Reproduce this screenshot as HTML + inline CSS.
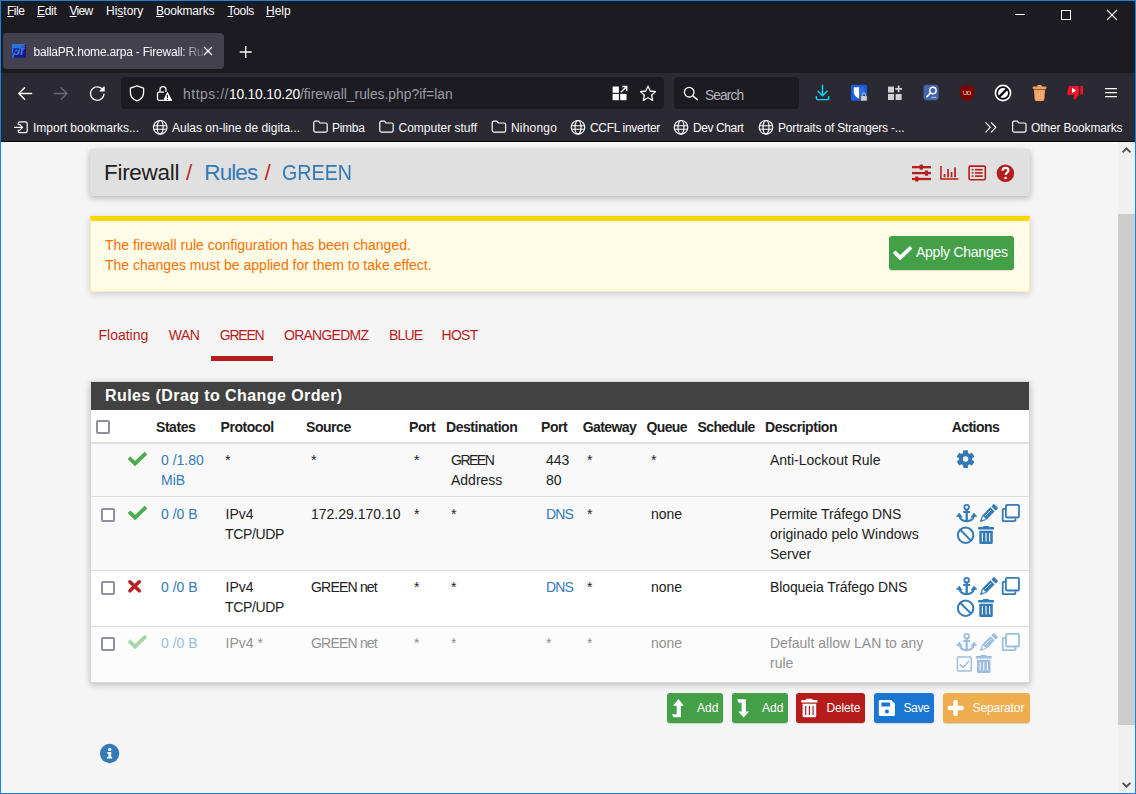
<!DOCTYPE html>
<html lang="en">
<head>
<meta charset="utf-8">
<title>ballaPR.home.arpa - Firewall: Rules: GREEN</title>
<style>
*{box-sizing:border-box;margin:0;padding:0}
html,body{width:1136px;height:794px;overflow:hidden;background:#1c1b22}
body{font-family:"Liberation Sans",sans-serif;position:relative;color:#fbfbfe}
.abs{position:absolute}
#win{position:absolute;left:0;top:0;width:1136px;height:794px;background:#1c1b22;overflow:hidden}
.wb{position:absolute;background:#1883d7;z-index:50}
/* ---------- browser chrome ---------- */
#menubar{position:absolute;left:0;top:0;width:1136px;height:30px;font-size:12px;line-height:16px;color:#fbfbfe}
#menubar span{position:absolute;top:3px;white-space:nowrap}
#menubar u{text-decoration:underline;text-underline-offset:1px}
#tab{position:absolute;left:3px;top:33px;width:221px;height:36px;background:#42414d;border-radius:4px}
#tabtitle{position:absolute;left:30.5px;top:11px;width:169px;height:18px;-webkit-mask-image:linear-gradient(to right,#000 0,#000 143px,transparent 175px);mask-image:linear-gradient(to right,#000 0,#000 143px,transparent 175px);font-size:12px;letter-spacing:-.21px;line-height:16px;white-space:nowrap;overflow:hidden;color:#fbfbfe}
#navbar{position:absolute;left:1px;top:73px;width:1134px;height:69px;background:#2b2a33;border-bottom:1px solid #020203}
#urlbar{position:absolute;left:121px;top:77px;width:543px;height:32px;background:#1c1b22;border-radius:4px}
#urltext{position:absolute;left:183px;top:85px;font-size:13.85px;line-height:18px;color:#9b9ba3;white-space:nowrap}
#urltext b{font-weight:normal;color:#fbfbfe;letter-spacing:-.2px}
#searchbar{position:absolute;left:674px;top:77px;width:125px;height:32px;background:#1c1b22;border-radius:4px}
#searchtext{position:absolute;left:705px;top:86px;letter-spacing:-.95px;font-size:13.85px;line-height:18px;color:#b4b4bb}
.bm{position:absolute;top:120px;font-size:12px;line-height:16px;white-space:nowrap;color:#fbfbfe}
/* ---------- page ---------- */
#page{position:absolute;left:1px;top:142px;width:1117px;height:651px;border-top:1px solid #fff;background:#f5f5f5;overflow:hidden;color:#212121;font-size:14px}
#scroll{position:absolute;left:1118px;top:142px;width:17px;height:651px;background:#f0f0f0}
#thumb{position:absolute;left:0;top:72px;width:17px;height:511px;background:#cdcdcd}

/* ---------- pfSense page ---------- */
.pg{position:absolute;white-space:nowrap;font-size:14px;line-height:20px;color:#212121}
#crumb{position:absolute;left:90px;top:149px;width:940px;height:47px;background:#e0e0e0;border-radius:2px;box-shadow:0 2px 5px rgba(0,0,0,.16),0 2px 10px rgba(0,0,0,.12)}
.h1{position:absolute;top:158px;font-size:22.5px;line-height:30px;white-space:nowrap;color:#212121;transform-origin:0 50%}
#alert{position:absolute;left:90px;top:216px;width:940px;height:76px;background:#fffde7;border:1px solid #ffe9b0;border-top:5px solid #ffd600;box-shadow:0 2px 5px rgba(0,0,0,.10),0 2px 10px rgba(0,0,0,.08)}
.al{color:#f96f00}
#apply{position:absolute;left:889px;top:236px;width:125px;height:34px;background:#43a047;border-radius:3px;box-shadow:0 1px 1px rgba(0,0,0,.15)}
.tab{color:#b71c1c}
#tabline{position:absolute;left:211px;top:356px;width:62px;height:5px;background:#b71c1c}
#panel{position:absolute;left:90px;top:381px;width:940px;height:302px;background:#fafafa;border:1px solid #d8d8d8;box-shadow:0 2px 5px rgba(0,0,0,.14),0 2px 10px rgba(0,0,0,.10)}
#phead{position:absolute;left:91px;top:382px;width:938px;height:28px;background:#424242}
#ptitle{position:absolute;left:105px;top:385px;font-size:16px;line-height:22px;font-weight:bold;color:#fff;letter-spacing:.42px;white-space:nowrap}
#thead{position:absolute;left:91px;top:410px;width:938px;height:32px;background:#fff;border-bottom:0}
.rowbg{position:absolute;left:91px;width:938px}
.hl{position:absolute;left:91px;width:938px;background:#ddd}
.th{font-weight:bold;letter-spacing:-.45px}
.lnk{color:#337ab7}
.dis{color:#919191}
.dis.lnk{color:#9bbcdb}
.cb{position:absolute;width:14px;height:14px;border:2px solid #8f8f9d;border-radius:2px;background:#fff}
.btn{position:absolute;top:693px;height:30px;border-radius:3px;box-shadow:0 1px 1px rgba(0,0,0,.15)}
.bt{position:absolute;top:698px;font-size:12px;line-height:20px;color:#fff;white-space:nowrap}
</style>
</head>
<body>
<div id="win">
  <div id="menubar">
    <span style="left:7px;letter-spacing:-.5px"><u>F</u>ile</span>
    <span style="left:37px;letter-spacing:-.3px"><u>E</u>dit</span>
    <span style="left:69.5px;letter-spacing:-.7px"><u>V</u>iew</span>
    <span style="left:106px">Hi<u>s</u>tory</span>
    <span style="left:156px;letter-spacing:-.2px"><u>B</u>ookmarks</span>
    <span style="left:227.5px;letter-spacing:-.3px"><u>T</u>ools</span>
    <span style="left:266px"><u>H</u>elp</span>
  </div>
  <div id="tab"><div id="tabtitle">ballaPR.home.arpa - Firewall: Ru</div></div>
  <div id="navbar"></div>
  <div id="urlbar"></div>
  <div id="urltext"><span style="letter-spacing:.55px">https://</span><b>10.10.10.20</b>/firewall_rules.php?if=lan</div>
  <div id="searchbar"></div>
  <div id="searchtext">Search</div>

  <svg id="chrome" class="abs" style="left:0;top:0" width="1136" height="141" viewBox="0 0 1136 141">
    <!-- window controls -->
    <path d="M1015 14.5H1025" stroke="#fbfbfe" stroke-width="1"/>
    <rect x="1061.5" y="10.5" width="9" height="9" fill="none" stroke="#fbfbfe" stroke-width="1"/>
    <path d="M1107 10L1117 20M1117 10L1107 20" stroke="#fbfbfe" stroke-width="1.1"/>
    <!-- tab favicon -->
    <defs><clipPath id="fvA"><path d="M11.800 44H25.900L19.500 49.500L11.800 54Z"/></clipPath><clipPath id="fvB"><path clip-rule="evenodd" d="M11.800 44H25.900V57.700H11.800Z M11.800 44H25.900L19.500 49.500L11.800 54Z"/></clipPath></defs>
    <rect x="11.800" y="44" width="14.100" height="13.700" fill="#17178c"/>
    <path d="M11.800 44H25.900L19.500 49.500L11.800 54Z" fill="#2a76d6"/>
    <text x="12.300" y="55" font-family="Liberation Sans,sans-serif" font-style="italic" font-weight="bold" font-size="13" letter-spacing="-.5" fill="#3a7ce2" clip-path="url(#fvB)">pf</text>
    <text x="12.300" y="55" font-family="Liberation Sans,sans-serif" font-style="italic" font-weight="bold" font-size="13" letter-spacing="-.5" fill="#1c2496" clip-path="url(#fvA)">pf</text>
    <!-- tab close -->
    <path d="M204 47L212 55M212 47L204 55" stroke="#fbfbfe" stroke-width="1.2"/>
    <!-- new tab + -->
    <path d="M239.7 52H251.7M245.7 46V58" stroke="#fbfbfe" stroke-width="1.3"/>
    <!-- back -->
    <path d="M31.6 93.5H19M24.6 87.7L18.8 93.5L24.6 99.3" fill="none" stroke="#fbfbfe" stroke-width="1.4" stroke-linecap="round" stroke-linejoin="round"/>
    <!-- forward -->
    <path d="M54.2 93.5H67M61.2 87.7L67 93.5L61.2 99.3" fill="none" stroke="#6b6a74" stroke-width="1.4" stroke-linecap="round" stroke-linejoin="round"/>
    <!-- reload -->
    <path transform="translate(88.8,85.1) scale(1.06)" fill="#fbfbfe" d="M10.707 6h3.793a.5.5 0 0 0 .5-.5V1.707a.5.5 0 0 0-.854-.353l-1.459 1.459A6.95 6.95 0 0 0 8 1C4.141 1 1 4.141 1 8s3.141 7 7 7a6.97 6.97 0 0 0 6.968-6.322.626.626 0 0 0-.562-.682.635.635 0 0 0-.682.562A5.726 5.726 0 0 1 8 13.75c-3.171 0-5.750-2.579-5.750-5.750S4.829 2.250 8 2.250a5.710 5.710 0 0 1 3.805 1.445l-1.451 1.451a.5.5 0 0 0 .353.854z"/>
    <!-- shield -->
    <path d="M137 85.9L143.6 88.2V92.6C143.6 96.9 140.6 99.7 137 100.8C133.4 99.700 130.400 96.900 130.400 92.600V88.200Z" fill="none" stroke="#fbfbfe" stroke-width="1.3" stroke-linejoin="round"/>
    <!-- lock + warning -->
    <path d="M160 92V89.600a3 3 0 0 1 6 0V92" fill="none" stroke="#fbfbfe" stroke-width="1.3"/>
    <path d="M164 92.100H159a1.500 1.500 0 0 0-1.500 1.500V98.800a1.500 1.500 0 0 0 1.500 1.500H163" fill="none" stroke="#fbfbfe" stroke-width="1.3"/>
    <path d="M167.800 92.300L172.200 100.300a.5.5 0 0 1-.45.750H163.700a.5.5 0 0 1-.45-.750L167 92.300a.46.46 0 0 1 .8 0z" fill="#fbfbfe"/>
    <path d="M167.400 94.700V98M167.400 99.100V100" stroke="#1c1b22" stroke-width="1.1"/>
    <!-- url grid icon -->
    <g fill="#fbfbfe"><rect x="612.600" y="86.500" width="6.300" height="6.300"/><rect x="612.600" y="93.900" width="6.300" height="6.300"/><rect x="620.200" y="93.900" width="6.300" height="6.300"/></g>
    <path d="M620.800 92.300L626.400 86.700M622.200 86.400H626.700V90.900" fill="none" stroke="#fbfbfe" stroke-width="1.500"/>
    <!-- star -->
    <path d="M648 86.200L650.250 91L655.500 91.600L651.600 95.200L652.650 100.350L648 97.800L643.350 100.350L644.400 95.200L640.500 91.600L645.750 91Z" fill="none" stroke="#fbfbfe" stroke-width="1.3" stroke-linejoin="round"/>
    <!-- search magnifier -->
    <circle cx="689.200" cy="92.200" r="4.800" fill="none" stroke="#fbfbfe" stroke-width="1.3"/>
    <path d="M692.700 95.700L697.400 99.600" stroke="#fbfbfe" stroke-width="1.4" stroke-linecap="round"/>
    <!-- download -->
    <path d="M822.500 85.200V95.600M818 91.300L822.500 95.800L827 91.300M816.300 96.600V98a1.600 1.600 0 0 0 1.600 1.600h9.200a1.600 1.600 0 0 0 1.600-1.600V96.600" fill="none" stroke="#00ddff" stroke-width="1.4" stroke-linecap="round" stroke-linejoin="round"/>
    <!-- bitwarden -->
    <rect x="851" y="84.800" width="16" height="16" rx="1.500" fill="#175ddc"/>
    <path d="M853.800 87.200H859.200V98.700C856 97.300 853.800 95.100 853.800 92.500Z" fill="#fff"/>
    <path d="M859.200 87.200H864.200V92.500C864.200 95.100 862.200 97.300 859.200 98.700Z" fill="#2f6be0"/>
    <rect x="860.600" y="95.600" width="6.600" height="5.400" rx=".7" fill="#cfcfd4" stroke="#2b2a33" stroke-width=".6"/>
    <path d="M862.300 95.600V94.600a1.600 1.600 0 0 1 3.200 0V95.600" fill="none" stroke="#cfcfd4" stroke-width="1"/>
    <!-- extensions -->
    <g fill="#cfcfd4"><rect x="888" y="86.600" width="6" height="6"/><rect x="888" y="94" width="6" height="6"/><rect x="895.600" y="94" width="6" height="6"/><path d="M897.800 85.600h1.700v2.500h2.500v1.700h-2.500v2.500h-1.700v-2.500h-2.500v-1.700h2.500z"/></g>
    <!-- search ext -->
    <rect x="923.500" y="84.800" width="15" height="15.500" rx="3" fill="#4363ab"/>
    <circle cx="932.900" cy="90.500" r="3.200" fill="none" stroke="#fff" stroke-width="1.400"/>
    <path d="M930.500 93L926.900 96.700" stroke="#fff" stroke-width="1.700" stroke-linecap="round"/>
    <path d="M931.500 97.300H936.200" stroke="#b9c6e6" stroke-width="1"/>
    <!-- ublock -->
    <path d="M967 85L974.200 87.300V92.800C974.200 96.800 971.200 99.600 967 101C962.800 99.600 959.800 96.800 959.800 92.800V87.300Z" fill="#800000"/>
    <text x="963.100" y="95.200" font-family="Liberation Sans,sans-serif" font-size="6" fill="#fff" letter-spacing="-.5" opacity=".92">UD</text>
    <!-- slash circle -->
    <circle cx="1003" cy="93" r="8.400" fill="#fbfbfe"/>
    <circle cx="1003" cy="93" r="5.900" fill="none" stroke="#111" stroke-width="1.700"/>
    <path d="M998.900 97.100L1007.100 88.900" stroke="#111" stroke-width="2.300"/>
    <!-- trash orange -->
    <g fill="#f0a15f"><rect x="1037.200" y="85" width="4.600" height="2.200" rx=".8"/><rect x="1032.600" y="86.600" width="13.800" height="2.300" rx="1"/><path d="M1033.800 89.600H1045.200L1044.300 99.600a1.500 1.500 0 0 1-1.500 1.400H1036.200a1.500 1.500 0 0 1-1.500-1.400Z"/></g>
    <path d="M1037 91.500V99M1039.500 91.500V99M1042 91.500V99" stroke="#f7c08f" stroke-width=".8"/>
    <!-- red thumbs down -->
    <path d="M1069.500 86H1079V94.500L1075 99.800C1073.800 99.800 1073.200 98.800 1073.500 97.600L1074.200 95H1069C1067.600 95 1066.800 93.800 1067.200 92.600L1068.600 87C1068.800 86.400 1069.100 86 1069.500 86Z" fill="#f0142a"/>
    <rect x="1080.300" y="86" width="2.700" height="8.400" fill="#f0142a"/>
    <path d="M1072 87.800L1076.300 90.400L1072 93Z" fill="#fff"/>
    <!-- hamburger -->
    <g fill="#fbfbfe"><rect x="1105" y="88" width="12" height="1.250" rx=".5"/><rect x="1105" y="92" width="12" height="1.250" rx=".5"/><rect x="1105" y="96" width="12" height="1.250" rx=".5"/></g>
    <!-- bookmarks toolbar icons -->
    <path d="M14.500 127.300H22.300M19.600 124.300L22.600 127.300L19.600 130.300" fill="none" stroke="#fbfbfe" stroke-width="1.200" stroke-linecap="round" stroke-linejoin="round"/>
    <path d="M18.200 124.600V123.600a1.700 1.700 0 0 1 1.700-1.700H25.500a1.700 1.700 0 0 1 1.700 1.700V131a1.700 1.700 0 0 1-1.700 1.700H19.900a1.700 1.700 0 0 1-1.700-1.700V130" fill="none" stroke="#fbfbfe" stroke-width="1.200" stroke-linecap="round"/>
    <g transform="translate(160.2,127.3)" fill="none" stroke="#fbfbfe" stroke-width="1.2"><circle r="6.8"/><ellipse rx="3" ry="6.8"/><path d="M-6.6 -1.6H6.6M-6.6 1.9H6.6" stroke-width="1.1"/></g><g transform="translate(578,127.3)" fill="none" stroke="#fbfbfe" stroke-width="1.2"><circle r="6.8"/><ellipse rx="3" ry="6.8"/><path d="M-6.6 -1.6H6.6M-6.6 1.9H6.6" stroke-width="1.1"/></g><g transform="translate(681,127.3)" fill="none" stroke="#fbfbfe" stroke-width="1.2"><circle r="6.8"/><ellipse rx="3" ry="6.8"/><path d="M-6.6 -1.6H6.6M-6.6 1.9H6.6" stroke-width="1.1"/></g><g transform="translate(766,127.3)" fill="none" stroke="#fbfbfe" stroke-width="1.2"><circle r="6.8"/><ellipse rx="3" ry="6.8"/><path d="M-6.6 -1.6H6.6M-6.6 1.9H6.6" stroke-width="1.1"/></g>
    <path transform="translate(313.2,120.6)" d="M0.6 2.1a1.5 1.5 0 0 1 1.5-1.5h3.1l1.7 1.8h5.6a1.5 1.5 0 0 1 1.5 1.5v6.1a1.5 1.5 0 0 1-1.5 1.5H2.1a1.5 1.5 0 0 1-1.5-1.5z" fill="none" stroke="#fbfbfe" stroke-width="1.2" stroke-linejoin="round"/><path transform="translate(379.2,120.6)" d="M0.6 2.1a1.5 1.5 0 0 1 1.5-1.5h3.1l1.7 1.8h5.6a1.5 1.5 0 0 1 1.5 1.5v6.1a1.5 1.5 0 0 1-1.5 1.5H2.1a1.5 1.5 0 0 1-1.5-1.5z" fill="none" stroke="#fbfbfe" stroke-width="1.2" stroke-linejoin="round"/><path transform="translate(491.6,120.6)" d="M0.6 2.1a1.5 1.5 0 0 1 1.5-1.5h3.1l1.7 1.8h5.6a1.5 1.5 0 0 1 1.5 1.5v6.1a1.5 1.5 0 0 1-1.5 1.5H2.1a1.5 1.5 0 0 1-1.5-1.5z" fill="none" stroke="#fbfbfe" stroke-width="1.2" stroke-linejoin="round"/><path transform="translate(1012,120.6)" d="M0.6 2.1a1.5 1.5 0 0 1 1.5-1.5h3.1l1.7 1.8h5.6a1.5 1.5 0 0 1 1.5 1.5v6.1a1.5 1.5 0 0 1-1.5 1.5H2.1a1.5 1.5 0 0 1-1.5-1.5z" fill="none" stroke="#fbfbfe" stroke-width="1.2" stroke-linejoin="round"/>
    <path d="M985.500 122.300L990.300 127.300L985.500 132.300M991 122.300L995.800 127.300L991 132.300" fill="none" stroke="#fbfbfe" stroke-width="1.200"/>
  </svg>

  <div class="bm" style="left:33px">Import bookmarks...</div>
  <div class="bm" style="left:172px">Aulas on-line de digita...</div>
  <div class="bm" style="left:332px;letter-spacing:-.3px">Pimba</div>
  <div class="bm" style="left:398.5px">Computer stuff</div>
  <div class="bm" style="left:511px;letter-spacing:.2px">Nihongo</div>
  <div class="bm" style="left:590px;letter-spacing:-.33px">CCFL inverter</div>
  <div class="bm" style="left:693px;letter-spacing:-.4px">Dev Chart</div>
  <div class="bm" style="left:778px;letter-spacing:-.16px">Portraits of Strangers -...</div>
  <div class="bm" style="left:1031px;letter-spacing:-.13px">Other Bookmarks</div>
  <div id="page"></div>
  <div id="crumb"></div>
  <div class="h1" style="left:104px;letter-spacing:-.3px">Firewall</div>
  <div class="h1" style="left:186px;color:#c62828">/</div>
  <div class="h1" style="left:204.3px;color:#337ab7;letter-spacing:-.9px">Rules</div>
  <div class="h1" style="left:264.5px;color:#c62828">/</div>
  <div class="h1" style="left:282.3px;color:#337ab7;transform:scaleX(.875)">GREEN</div>
  <div id="alert"></div>
  <div class="pg al" style="left:105px;top:234.5px;">The firewall rule configuration has been changed.</div>
  <div class="pg al" style="left:105px;top:254.5px;">The changes must be applied for them to take effect.</div>
  <div id="apply"></div>
  <div class="pg " style="left:916px;top:242px;color:#fff;letter-spacing:-.25px">Apply Changes</div>
  <div class="pg tab" style="left:98.5px;top:324.5px;letter-spacing:0px">Floating</div>
  <div class="pg tab" style="left:168.7px;top:324.5px;letter-spacing:-0.5px">WAN</div>
  <div class="pg tab" style="left:219.7px;top:324.5px;letter-spacing:-1.2px">GREEN</div>
  <div class="pg tab" style="left:284px;top:324.5px;letter-spacing:-0.75px">ORANGEDMZ</div>
  <div class="pg tab" style="left:389px;top:324.5px;letter-spacing:-0.8px">BLUE</div>
  <div class="pg tab" style="left:441.5px;top:324.5px;letter-spacing:-0.7px">HOST</div>
  <div id="tabline"></div>
  <div id="panel"></div><div id="phead"></div><div id="ptitle">Rules (Drag to Change Order)</div><div id="thead"></div>
  <div class="rowbg" style="top:444px;height:52px;background:#f9f9f9"></div><div class="rowbg" style="top:497px;height:73px;background:#f9f9f9"></div><div class="rowbg" style="top:571px;height:55px;background:#fff"></div><div class="rowbg" style="top:627px;height:55px;background:#fcfcfc"></div>
  <div class="hl" style="top:442px;height:2px"></div>
  <div class="hl" style="top:496px;height:1px"></div>
  <div class="hl" style="top:570px;height:1px"></div>
  <div class="hl" style="top:626px;height:1px"></div>
  <div class="pg th" style="left:156px;top:417px;">States</div>
  <div class="pg th" style="left:220.5px;top:417px;">Protocol</div>
  <div class="pg th" style="left:306px;top:417px;">Source</div>
  <div class="pg th" style="left:409px;top:417px;">Port</div>
  <div class="pg th" style="left:446px;top:417px;">Destination</div>
  <div class="pg th" style="left:541px;top:417px;">Port</div>
  <div class="pg th" style="left:582.7px;top:417px;letter-spacing:-.6px;">Gateway</div>
  <div class="pg th" style="left:646.5px;top:417px;letter-spacing:-.65px;">Queue</div>
  <div class="pg th" style="left:697.5px;top:417px;letter-spacing:-.62px;">Schedule</div>
  <div class="pg th" style="left:765px;top:417px;">Description</div>
  <div class="pg th" style="left:951.7px;top:417px;letter-spacing:-.55px;">Actions</div>
  <div class="cb" style="left:96px;top:420px"></div>
  <div class="pg lnk" style="left:161px;top:450px;">0 /1.80</div>
  <div class="pg lnk" style="left:161px;top:470px;">MiB</div>
  <div class="pg " style="left:225px;top:450px;">*</div>
  <div class="pg " style="left:311px;top:450px;">*</div>
  <div class="pg " style="left:414px;top:450px;">*</div>
  <div class="pg " style="left:451px;top:450px;letter-spacing:-1.5px">GREEN</div>
  <div class="pg " style="left:451px;top:470px;">Address</div>
  <div class="pg " style="left:546px;top:450px;">443</div>
  <div class="pg " style="left:546px;top:470px;">80</div>
  <div class="pg " style="left:587px;top:450px;">*</div>
  <div class="pg " style="left:651px;top:450px;">*</div>
  <div class="pg " style="left:770px;top:450px;">Anti-Lockout Rule</div>
  <div class="pg lnk" style="left:161px;top:504px;">0 /0 B</div>
  <div class="pg " style="left:225.5px;top:504px;">IPv4</div>
  <div class="pg " style="left:225px;top:524px;letter-spacing:-.35px">TCP/UDP</div>
  <div class="pg " style="left:311px;top:504px;">172.29.170.10</div>
  <div class="pg " style="left:414px;top:504px;">*</div>
  <div class="pg " style="left:451px;top:504px;">*</div>
  <div class="pg lnk" style="left:546px;top:504px;letter-spacing:-.85px">DNS</div>
  <div class="pg " style="left:587px;top:504px;">*</div>
  <div class="pg " style="left:651px;top:504px;">none</div>
  <div class="pg " style="left:770px;top:504px;letter-spacing:-.1px">Permite Tráfego DNS</div>
  <div class="pg " style="left:770px;top:524px;">originado pelo Windows</div>
  <div class="pg " style="left:770px;top:544px;">Server</div>
  <div class="pg lnk" style="left:161px;top:577px;">0 /0 B</div>
  <div class="pg " style="left:225.5px;top:577px;">IPv4</div>
  <div class="pg " style="left:225px;top:597px;letter-spacing:-.35px">TCP/UDP</div>
  <div class="pg " style="left:311px;top:577px;letter-spacing:-.8px">GREEN net</div>
  <div class="pg " style="left:414px;top:577px;">*</div>
  <div class="pg " style="left:451px;top:577px;">*</div>
  <div class="pg lnk" style="left:546px;top:577px;letter-spacing:-.85px">DNS</div>
  <div class="pg " style="left:587px;top:577px;">*</div>
  <div class="pg " style="left:651px;top:577px;">none</div>
  <div class="pg " style="left:770px;top:577px;letter-spacing:-.1px">Bloqueia Tráfego DNS</div>
  <div class="pg lnk dis" style="left:161px;top:633px;">0 /0 B</div>
  <div class="pg dis" style="left:225.5px;top:633px;">IPv4 *</div>
  <div class="pg dis" style="left:311px;top:633px;letter-spacing:-.8px">GREEN net</div>
  <div class="pg dis" style="left:414px;top:633px;">*</div>
  <div class="pg dis" style="left:451px;top:633px;">*</div>
  <div class="pg dis" style="left:546px;top:633px;">*</div>
  <div class="pg dis" style="left:587px;top:633px;">*</div>
  <div class="pg dis" style="left:651px;top:633px;">none</div>
  <div class="pg dis" style="left:770px;top:633px;">Default allow LAN to any</div>
  <div class="pg dis" style="left:770px;top:653px;">rule</div>
  <div class="cb" style="left:101px;top:508px"></div>
  <div class="cb" style="left:101px;top:581px"></div>
  <div class="cb" style="left:101px;top:637px"></div>
  <div class="btn" style="left:667px;width:56px;background:#43a047"></div>
  <div class="btn" style="left:732px;width:56px;background:#43a047"></div>
  <div class="btn" style="left:796px;width:69px;background:#b71c1c"></div>
  <div class="btn" style="left:874px;width:60px;background:#1976d2"></div>
  <div class="btn" style="left:943px;width:87px;background:#f0ad4e"></div>
  <div class="bt" style="left:697px">Add</div>
  <div class="bt" style="left:762px">Add</div>
  <div class="bt" style="left:826.5px;letter-spacing:-.15px">Delete</div>
  <div class="bt" style="left:903.5px;letter-spacing:-.4px">Save</div>
  <div class="bt" style="left:972.5px;letter-spacing:-.1px">Separator</div>
  <div id="scroll"><div id="thumb"></div></div>
  <svg id="picons" class="abs" style="left:0;top:0;pointer-events:none" width="1136" height="794" viewBox="0 0 1136 794">
    <g fill="#b71c1c"><rect x="912" y="166" width="18.900" height="2.300"/><rect x="912" y="171.950" width="18.900" height="2.300"/><rect x="912" y="177.850" width="18.900" height="2.300"/><rect x="919.700" y="164.600" width="3.200" height="5.100" rx=".6"/><rect x="924.900" y="170.600" width="3.200" height="5.100" rx=".6"/><rect x="915.200" y="176.500" width="3.200" height="5.100" rx=".6"/></g>
    <g fill="#b71c1c"><path d="M940.200 166H941.700V178.300H958.400V179.700H940.200Z"/><rect x="943.700" y="174" width="1.700" height="3.300"/><rect x="947.200" y="169" width="1.700" height="8.300"/><rect x="950.700" y="172" width="1.700" height="5.300"/><rect x="954.200" y="167.400" width="1.700" height="9.900"/></g>
    <rect x="969.100" y="166.100" width="16.200" height="13.600" rx="1.300" fill="none" stroke="#b71c1c" stroke-width="1.600"/><g fill="#b71c1c"><rect x="971.800" y="168.900" width="1.700" height="1.600"/><rect x="971.800" y="172.100" width="1.700" height="1.600"/><rect x="971.800" y="175.300" width="1.700" height="1.600"/><rect x="975" y="168.900" width="7.700" height="1.600"/><rect x="975" y="172.100" width="7.700" height="1.600"/><rect x="975" y="175.300" width="7.700" height="1.600"/></g>
    <circle cx="1005.400" cy="173.200" r="8.750" fill="#b71c1c"/><path d="M1002.600 170.700C1002.600 168.900 1003.900 167.900 1005.500 167.900C1007.100 167.900 1008.400 168.900 1008.400 170.500C1008.400 172.500 1005.600 172.700 1005.600 175" fill="none" stroke="#fff" stroke-width="2.100"/><circle cx="1005.600" cy="178" r="1.350" fill="#fff"/>
    <path d="M893.05 253.10L895.35 250.80L900.20 255.30L909.80 246.20L912.15 248.50L900.20 260.15Z" fill="#fff" stroke="#fff" stroke-width=".5" stroke-linejoin="round"/>
    <path d="M127.90 459.00L130.20 456.70L135.05 461.20L144.65 452.10L147.00 454.40L135.05 466.05Z" fill="#48ab4c" stroke="#48ab4c" stroke-width=".5" stroke-linejoin="round"/>
    <path d="M127.90 513.00L130.20 510.70L135.05 515.20L144.65 506.10L147.00 508.40L135.05 520.05Z" fill="#48ab4c" stroke="#48ab4c" stroke-width=".5" stroke-linejoin="round"/>
    <path d="M129.90 581.75L139.30 590.85M139.30 581.75L129.90 590.85" stroke="#b91d1d" stroke-width="3.5" stroke-linecap="round" fill="none"/>
    <path d="M127.90 642.00L130.20 639.70L135.05 644.20L144.65 635.10L147.00 637.40L135.05 649.05Z" fill="#a6d5a8" stroke="#a6d5a8" stroke-width=".5" stroke-linejoin="round"/>
    <g transform="translate(965.6,459.1)" fill="#337ab7"><circle r="6.7"/><rect x="-2.45" y="-8.85" width="4.9" height="4" rx=".7" transform="rotate(0)"/><rect x="-2.45" y="-8.85" width="4.9" height="4" rx=".7" transform="rotate(60)"/><rect x="-2.45" y="-8.85" width="4.9" height="4" rx=".7" transform="rotate(120)"/><rect x="-2.45" y="-8.85" width="4.9" height="4" rx=".7" transform="rotate(180)"/><rect x="-2.45" y="-8.85" width="4.9" height="4" rx=".7" transform="rotate(240)"/><rect x="-2.45" y="-8.85" width="4.9" height="4" rx=".7" transform="rotate(300)"/><circle r="2.75" fill="#f9f9f9"/></g>
    <g transform="translate(0,0)" fill="none" stroke="#337ab7"><circle cx="966.65" cy="507.2" r="2.3" stroke-width="1.8"/><path d="M963.2 512H970.1" stroke-width="1.9"/><path d="M966.7 509.6V521.3" stroke-width="2.3"/><path d="M959.6 516.3C960.2 519.4 963.2 521.2 966.65 521.2C970.1 521.2 973.1 519.4 973.7 516.3" stroke-width="1.9"/><path d="M959.3 513.1L956.4 516.4L962.4 517.3Z" fill="#337ab7" stroke-width=".6" stroke-linejoin="round"/><path d="M974 513.1L976.9 516.4L970.9 517.3Z" fill="#337ab7" stroke-width=".6" stroke-linejoin="round"/></g>
    <g transform="translate(0,0)"><path d="M986.38 519.86L994.65 511.59L990.41 507.35L982.14 515.62Z" fill="#337ab7"/><path d="M995.64 509.89L997.41 508.12L993.88 504.59L992.11 506.36Z" fill="#337ab7" stroke="#337ab7" stroke-width="1.1" stroke-linejoin="round"/><path d="M982.49 515.97L980.79 521.21L986.03 519.51" fill="#fafafa" stroke="#337ab7" stroke-width="1.15" stroke-linejoin="miter"/><path d="M980.30 521.70L981.29 518.59L983.41 520.71Z" fill="#337ab7"/><path d="M984.90 516.11L990.98 510.03" stroke="#fafafa" stroke-width=".9" opacity=".8"/></g>
    <g transform="translate(0,0)" fill="none" stroke="#337ab7" stroke-width="1.8" stroke-linejoin="round"><rect x="1005.9" y="504.9" width="13.1" height="12.6" rx="1.3"/><path d="M1005 508.9H1003.6a.9.9 0 0 0-.9.9V520.200a.9.900 0 0 0 .9.900H1014.500a.9.900 0 0 0 .9-.900V518.400"/></g>
    <g transform="translate(0,73)" fill="none" stroke="#337ab7"><circle cx="966.65" cy="507.2" r="2.3" stroke-width="1.8"/><path d="M963.2 512H970.1" stroke-width="1.9"/><path d="M966.7 509.6V521.3" stroke-width="2.3"/><path d="M959.6 516.3C960.2 519.4 963.2 521.2 966.65 521.2C970.1 521.2 973.1 519.4 973.7 516.3" stroke-width="1.9"/><path d="M959.3 513.1L956.4 516.4L962.4 517.3Z" fill="#337ab7" stroke-width=".6" stroke-linejoin="round"/><path d="M974 513.1L976.9 516.4L970.9 517.3Z" fill="#337ab7" stroke-width=".6" stroke-linejoin="round"/></g>
    <g transform="translate(0,73)"><path d="M986.38 519.86L994.65 511.59L990.41 507.35L982.14 515.62Z" fill="#337ab7"/><path d="M995.64 509.89L997.41 508.12L993.88 504.59L992.11 506.36Z" fill="#337ab7" stroke="#337ab7" stroke-width="1.1" stroke-linejoin="round"/><path d="M982.49 515.97L980.79 521.21L986.03 519.51" fill="#fafafa" stroke="#337ab7" stroke-width="1.15" stroke-linejoin="miter"/><path d="M980.30 521.70L981.29 518.59L983.41 520.71Z" fill="#337ab7"/><path d="M984.90 516.11L990.98 510.03" stroke="#fafafa" stroke-width=".9" opacity=".8"/></g>
    <g transform="translate(0,73)" fill="none" stroke="#337ab7" stroke-width="1.8" stroke-linejoin="round"><rect x="1005.9" y="504.9" width="13.1" height="12.6" rx="1.3"/><path d="M1005 508.9H1003.6a.9.9 0 0 0-.9.9V520.200a.9.900 0 0 0 .9.900H1014.500a.9.900 0 0 0 .9-.900V518.400"/></g>
    <g transform="translate(0,129)" fill="none" stroke="#9bbedd"><circle cx="966.65" cy="507.2" r="2.3" stroke-width="1.8"/><path d="M963.2 512H970.1" stroke-width="1.9"/><path d="M966.7 509.6V521.3" stroke-width="2.3"/><path d="M959.6 516.3C960.2 519.4 963.2 521.2 966.65 521.2C970.1 521.2 973.1 519.4 973.7 516.3" stroke-width="1.9"/><path d="M959.3 513.1L956.4 516.4L962.4 517.3Z" fill="#9bbedd" stroke-width=".6" stroke-linejoin="round"/><path d="M974 513.1L976.9 516.4L970.9 517.3Z" fill="#9bbedd" stroke-width=".6" stroke-linejoin="round"/></g>
    <g transform="translate(0,129)"><path d="M986.38 519.86L994.65 511.59L990.41 507.35L982.14 515.62Z" fill="#9bbedd"/><path d="M995.64 509.89L997.41 508.12L993.88 504.59L992.11 506.36Z" fill="#9bbedd" stroke="#9bbedd" stroke-width="1.1" stroke-linejoin="round"/><path d="M982.49 515.97L980.79 521.21L986.03 519.51" fill="#fafafa" stroke="#9bbedd" stroke-width="1.15" stroke-linejoin="miter"/><path d="M980.30 521.70L981.29 518.59L983.41 520.71Z" fill="#9bbedd"/><path d="M984.90 516.11L990.98 510.03" stroke="#fafafa" stroke-width=".9" opacity=".8"/></g>
    <g transform="translate(0,129)" fill="none" stroke="#9bbedd" stroke-width="1.8" stroke-linejoin="round"><rect x="1005.9" y="504.9" width="13.1" height="12.6" rx="1.3"/><path d="M1005 508.9H1003.6a.9.9 0 0 0-.9.9V520.200a.9.900 0 0 0 .9.900H1014.500a.9.900 0 0 0 .9-.900V518.400"/></g>
    <g transform="translate(0,0)" fill="none" stroke="#337ab7" stroke-width="2"><circle cx="965.6" cy="535.2" r="7.7"/><path d="M960.2 529.8L971 540.6"/></g>
    <g transform="translate(0.00,0)" fill="#337ab7"><rect x="982.8" y="525.9" width="6.2" height="2" rx=".8"/><rect x="978.1" y="527.1" width="15.9" height="2.4" rx=".5"/><path d="M979.3 530.8H992.8V542.800a1.200 1.200 0 0 1-1.200 1.200H980.500a1.200 1.200 0 0 1-1.200-1.200Z"/><path d="M982.4 533V541.500M986.050 533V541.500M989.700 533V541.500" stroke="#fafafa" stroke-width="1.100"/></g>
    <g transform="translate(0,73)" fill="none" stroke="#337ab7" stroke-width="2"><circle cx="965.6" cy="535.2" r="7.7"/><path d="M960.2 529.8L971 540.6"/></g>
    <g transform="translate(0.00,73)" fill="#337ab7"><rect x="982.8" y="525.9" width="6.2" height="2" rx=".8"/><rect x="978.1" y="527.1" width="15.9" height="2.4" rx=".5"/><path d="M979.3 530.8H992.8V542.800a1.200 1.200 0 0 1-1.200 1.200H980.500a1.200 1.200 0 0 1-1.200-1.200Z"/><path d="M982.4 533V541.500M986.050 533V541.500M989.700 533V541.500" stroke="#fafafa" stroke-width="1.100"/></g>
    <g transform="translate(0,0)" fill="none" stroke="#9bbedd"><rect x="957.4" y="657" width="13.9" height="14" rx="1.3" stroke-width="1.4"/><path d="M959.800 664.400L962.800 667.400L968.900 661.100" stroke-width="1.500"/></g>
    <g transform="translate(-2.30,129)" fill="#9bbedd"><rect x="982.8" y="525.9" width="6.2" height="2" rx=".8"/><rect x="978.1" y="527.1" width="15.9" height="2.4" rx=".5"/><path d="M979.3 530.8H992.8V542.800a1.200 1.200 0 0 1-1.200 1.200H980.500a1.200 1.200 0 0 1-1.200-1.200Z"/><path d="M982.4 533V541.500M986.050 533V541.500M989.700 533V541.500" stroke="#fafafa" stroke-width="1.100"/></g>
    <path d="M678.45 699.1L683.8 705.8H680.9V717.3H673.6L671.9 714.2H676.700V705.800H673.100Z" fill="#fff"/>
    <path d="M737 699.2H745.9V711.600H749L743.650 717.400L738.300 711.600H741.600V702.800H738.700Z" fill="#fff"/>
    <g fill="#fff"><rect x="806" y="698.7" width="6.600" height="2.200" rx=".8"/><rect x="801.300" y="700.100" width="16.200" height="2.400" rx=".5"/><path d="M802.600 703.800H816.200V716a1.300 1.300 0 0 1-1.300 1.300H803.900a1.300 1.300 0 0 1-1.300-1.300Z"/><path d="M805.700 706V715M809.400 706V715M813.100 706V715" stroke="#b71c1c" stroke-width="1.200"/></g>
    <path d="M880.2 700H891.2L895 703.800V714.700a1.400 1.400 0 0 1-1.400 1.400H880.200a1.400 1.400 0 0 1-1.400-1.400V701.400a1.400 1.400 0 0 1 1.400-1.400Z" fill="#fff"/><rect x="881.400" y="702.400" width="8.700" height="4.100" rx=".4" fill="#1976d2"/><circle cx="886.900" cy="711.400" r="2" fill="#1976d2"/>
    <path transform="translate(947.70,700.10) scale(0.01122) translate(-192,-128)" d="M1600 736v192q0 40-28 68t-68 28h-416v416q0 40-28 68t-68 28h-192q-40 0-68-28t-28-68v-416h-416q-40 0-68-28t-28-68v-192q0-40 28-68t68-28h416v-416q0-40 28-68t68-28h192q40 0 68 28t28 68v416h416q40 0 68 28t28 68z" fill="#fff"/>
    <circle cx="109.600" cy="753.500" r="9.700" fill="#337ab7"/><circle cx="109.700" cy="749.400" r="1.650" fill="#fff"/><path d="M107.200 752H111.200V757.100H112.200V758.500H107V757.100H108.400V753.400H107.200Z" fill="#fff"/>
    <path d="M1122.600 152.300L1126.500 148.400L1130.400 152.300" fill="none" stroke="#505050" stroke-width="1.900"/><path d="M1122.600 782.800L1126.500 786.700L1130.400 782.800" fill="none" stroke="#505050" stroke-width="1.900"/>
    </svg>
  <div class="wb" style="left:0;top:0;width:1136px;height:1px"></div>
  <div class="wb" style="left:0;top:0;width:1px;height:794px"></div>
  <div class="wb" style="left:1135px;top:0;width:1px;height:794px"></div>
  <div class="wb" style="left:0;top:793px;width:1136px;height:1px"></div>
</div>
</body>
</html>
